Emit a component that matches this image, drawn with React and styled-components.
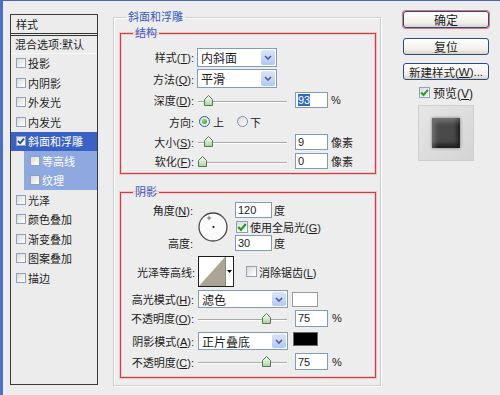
import React from 'react';
import styled, { createGlobalStyle } from 'styled-components';

const Global = createGlobalStyle`
  html, body { margin: 0; padding: 0; background: #ededed; }
  body { font-family: "Liberation Sans", "Noto Sans CJK SC", sans-serif; font-size: 11px; color: #1c1c1c; }
  * { box-sizing: border-box; }
`;

const Window = styled.div`
  width: 500px;
  height: 395px;
  overflow: hidden;
  background: #ededed;
  border-left: 3px solid #4a70c8;
  border-top: 1px solid #4b68a8;
  display: flex;
  align-items: flex-start;
  padding: 9px 0 0 7px;
`;

/* ---------- left style list ---------- */
const StylePanel = styled.div`
  width: 88px;
  height: 371px;
  margin-top: 4px;
  flex: none;
  border: 1px solid #3a3a3a;
  background: #ececec;
  display: flex;
  flex-direction: column;
`;

const PanelHeader = styled.div`
  height: 21px;
  flex: none;
  padding-left: 5px;
  display: flex;
  align-items: center;
  border-bottom: 3px double #333;
`;

const BlendRow = styled.div`
  height: 17.5px;
  flex: none;
  padding-left: 4px;
  display: flex;
  align-items: center;
  white-space: nowrap;
  border-bottom: 1px solid #f8f8f8;
`;

const LayerRow = styled.div`
  height: 19.5px;
  flex: none;
  display: flex;
  align-items: center;
  gap: 2px;
  margin-left: ${(p) => (p.$sub ? 13 : 0)}px;
  padding-left: ${(p) => (p.$sub ? 6 : 5)}px;
  background: ${(p) => (p.$selected ? '#3a62c6' : p.$sub ? '#8ea8e0' : 'transparent')};
  color: ${(p) => (p.$selected || p.$sub ? '#fff' : '#1c1c1c')};
  white-space: nowrap;
`;

const Box = styled.span`
  width: ${(p) => p.$size}px;
  height: ${(p) => p.$size}px;
  flex: none;
  margin-left: ${(p) => p.$ml || 0}px;
  border: 1px solid #8ea2bf;
  background: linear-gradient(135deg, #dedbd2, #ffffff);
  display: inline-flex;
  align-items: center;
  justify-content: center;
`;

const CheckBox = ({ checked, size = 10, ml, color = '#21a121' }) => (
  <Box $size={size} $ml={ml}>
    {checked && (
      <svg width={size - 2} height={size - 2} viewBox="0 0 8 8">
        <path d="M1 4 L3.2 6.2 L7 1.6" stroke={color} strokeWidth="1.8" fill="none" />
      </svg>
    )}
  </Box>
);

/* ---------- main groups ---------- */
const OuterGroup = styled.fieldset`
  margin: 0 0 0 15px;
  width: 268px;
  height: 376px;
  min-width: 0;
  flex: none;
  padding: 0 4px 0 6px;
  border: 1px solid #cdcdcd;
  box-shadow: 1px 1px 0 #fff, inset 1px 1px 0 #fff;
  display: flex;
  flex-direction: column;
`;

const Legend = styled.legend`
  margin-left: ${(p) => (p.$ml != null ? p.$ml : 12)}px;
  padding: 0 2px;
  font-size: 11px;
  line-height: 14px;
  color: #3658c0;
`;

const Section = styled.fieldset`
  margin: ${(p) => p.$mt}px 0 0 0;
  padding: ${(p) => p.$pt}px 0 0 0;
  height: ${(p) => p.$h}px;
  min-width: 0;
  flex: none;
  border: 1px solid #d43c44;
  box-shadow: 0 0 0 1px rgba(232, 150, 150, 0.45), inset 0 0 0 1px rgba(232, 150, 150, 0.35);
  display: flex;
  flex-direction: column;
`;

const Row = styled.div`
  display: flex;
  align-items: center;
  flex: none;
  height: ${(p) => p.$h}px;
  margin-top: ${(p) => p.$mt || 0}px;
`;

const Label = styled.span`
  width: 76px;
  flex: none;
  text-align: right;
  padding-right: ${(p) => (p.$pr != null ? p.$pr : 3)}px;
  font-size: 11px;
  white-space: nowrap;
  grid-column: 1;
  grid-row: ${(p) => p.$row || 'auto'};
  justify-self: stretch;
`;

const Select = styled.div`
  width: ${(p) => p.$w}px;
  height: ${(p) => p.$h}px;
  margin-left: ${(p) => p.$ml || 0}px;
  flex: none;
  border: 1px solid #7f9db9;
  background: #fff;
  display: flex;
  align-items: center;
  padding-left: 3px;
  font-size: 12px;
`;

const SelectText = styled.span`
  flex: 1;
  white-space: nowrap;
`;

const SelectArrow = styled.span`
  width: 14px;
  align-self: stretch;
  margin: 1px;
  border-radius: 2px;
  background: linear-gradient(#dbe5fb, #b3c7f3);
  display: flex;
  align-items: center;
  justify-content: center;
`;

const Dropdown = ({ text, w, h = 19, ml }) => (
  <Select $w={w} $h={h} $ml={ml}>
    <SelectText>{text}</SelectText>
    <SelectArrow>
      <svg width="8" height="5" viewBox="0 0 8 5">
        <path d="M1 1 L4 4 L7 1" stroke="#4d6185" strokeWidth="1.6" fill="none" />
      </svg>
    </SelectArrow>
  </Select>
);

const NumBox = styled.div`
  width: ${(p) => p.$w || 33}px;
  height: ${(p) => p.$h || 16}px;
  margin-left: ${(p) => p.$ml || 0}px;
  flex: none;
  border: 1px solid #7f9db9;
  background: #fff;
  font-size: 11px;
  padding-left: 2px;
  display: flex;
  align-items: center;
`;

const Highlight = styled.span`
  background: #316ac5;
  color: #fff;
`;

const Unit = styled.span`
  margin-left: ${(p) => (p.$ml != null ? p.$ml : 3)}px;
  font-size: 11px;
  white-space: nowrap;
`;

const Track = styled.div`
  position: relative;
  width: ${(p) => p.$w || 89}px;
  height: 11px;
  margin-left: ${(p) => p.$ml || 0}px;
  flex: none;
  &::before {
    content: '';
    position: absolute;
    left: 0;
    right: 0;
    top: 6px;
    height: 1px;
    background: #a9a9a9;
    box-shadow: 0 1px 0 #fff;
  }
`;

const ThumbSvg = styled.svg`
  position: absolute;
  top: 0;
`;

const Slider = ({ pos, w = 89, ml = 1 }) => (
  <Track $w={w} $ml={ml}>
    <ThumbSvg width="9" height="11" viewBox="0 0 9 11" style={{ left: `${pos * (w - 9)}px` }}>
      <defs>
        <linearGradient id="tg" x1="0" y1="0" x2="0" y2="1">
          <stop offset="0" stopColor="#ffffff" />
          <stop offset="1" stopColor="#a3d896" />
        </linearGradient>
      </defs>
      <path d="M0.5 4.5 L4.5 0.5 L8.5 4.5 L8.5 10.5 L0.5 10.5 Z" fill="url(#tg)" stroke="#5a735a" strokeWidth="1" />
    </ThumbSvg>
  </Track>
);

const RadioCircle = styled.span`
  width: 11px;
  height: 11px;
  flex: none;
  margin-left: ${(p) => p.$ml || 0}px;
  border-radius: 50%;
  border: 1px solid ${(p) => (p.$on ? '#2a5a96' : '#6d8fb8')};
  background: linear-gradient(135deg, #dcdad2, #ffffff);
  display: inline-flex;
  align-items: center;
  justify-content: center;
`;

const RadioDot = styled.span`
  width: 5px;
  height: 5px;
  border-radius: 50%;
  background: radial-gradient(circle at 35% 35%, #7fe07f, #1f9a1f);
`;

const Text = styled.span`
  margin-left: ${(p) => p.$ml || 0}px;
  font-size: ${(p) => p.$fs || 11}px;
  white-space: nowrap;
`;

/* ---------- angle block ---------- */
const AngleGrid = styled.div`
  display: grid;
  grid-template-columns: 76px 38px auto;
  grid-template-rows: 16px 17px 16px;
  align-items: center;
  justify-items: start;
  flex: none;
`;

const Dial = styled.svg`
  grid-column: 2;
  grid-row: 1 / span 3;
  margin-left: 1px;
`;

const Cell = styled.div`
  grid-column: 3;
  grid-row: ${(p) => p.$row};
  display: flex;
  align-items: center;
`;

/* ---------- contour thumb ---------- */
const ContourBox = styled.div`
  width: 36px;
  height: 31px;
  margin-left: 1px;
  flex: none;
  border: 1px solid #1e1e1e;
  background: #fff;
  display: flex;
`;

const ContourArrow = styled.span`
  width: 8px;
  border-left: 1px solid #8a8a8a;
  display: flex;
  align-items: center;
  justify-content: center;
`;

const Swatch = styled.span`
  width: ${(p) => p.$w}px;
  height: ${(p) => p.$h}px;
  margin-left: ${(p) => p.$ml}px;
  flex: none;
  background: ${(p) => p.$color};
  border: 1px solid ${(p) => p.$border};
  align-self: ${(p) => p.$align || 'center'};
`;

/* ---------- right column ---------- */
const Side = styled.div`
  margin-left: 22px;
  width: 86px;
  flex: none;
  padding-top: 1px;
  display: flex;
  flex-direction: column;
  align-items: center;
`;

const DialogButton = styled.div`
  width: 86px;
  height: 17px;
  flex: none;
  margin-top: ${(p) => p.$mt || 0}px;
  border: 1px solid #2b4d7e;
  border-radius: 3px;
  background: linear-gradient(#ffffff, #f1f0ec 70%, #d9d4ca);
  font-size: ${(p) => p.$fs || 12}px;
  display: flex;
  align-items: center;
  justify-content: center;
  white-space: nowrap;
  box-shadow: ${(p) => (p.$default ? '0 0 0 1px #e3707e' : 'none')};
`;

const PreviewRow = styled.div`
  margin-top: 6px;
  height: 12px;
  display: flex;
  align-items: center;
`;

const PreviewBox = styled.div`
  margin-top: 7px;
  width: 56px;
  height: 56px;
  border: 1px solid #cfcfcf;
  background: linear-gradient(135deg, #e6e6e6, #d4d4d4);
  display: flex;
  align-items: center;
  justify-content: center;
`;

const PreviewTile = styled.div`
  width: 28px;
  height: 30px;
  background: #4a4a4a;
  filter: blur(0.4px);
  box-shadow: inset 3px 4px 4px rgba(255, 255, 255, 0.22), inset -3px -4px 4px rgba(0, 0, 0, 0.6), 0 0 3px rgba(0, 0, 0, 0.45);
`;

const layers = [
  { name: '投影' },
  { name: '内阴影' },
  { name: '外发光' },
  { name: '内发光' },
  { name: '斜面和浮雕', selected: true, checked: true },
  { name: '等高线', sub: true },
  { name: '纹理', sub: true },
  { name: '光泽' },
  { name: '颜色叠加' },
  { name: '渐变叠加' },
  { name: '图案叠加' },
  { name: '描边' },
];

export default function App() {
  return (
    <>
      <Global />
      <Window>
        <StylePanel>
          <PanelHeader>样式</PanelHeader>
          <BlendRow>混合选项:默认</BlendRow>
          {layers.map((l) => (
            <LayerRow key={l.name} $selected={l.selected} $sub={l.sub}>
              <CheckBox checked={l.checked} size={10} color="#1d4f9c" />
              <span>{l.name}</span>
            </LayerRow>
          ))}
        </StylePanel>

        <OuterGroup>
          <Legend $ml={6}>斜面和浮雕</Legend>

          <Section $mt={2} $pt={6.5} $h={148}>
            <Legend>结构</Legend>
            <Row $h={21}>
              <Label>样式(<u>T</u>):</Label>
              <Dropdown text="内斜面" w={80} />
            </Row>
            <Row $h={22}>
              <Label>方法(<u>Q</u>):</Label>
              <Dropdown text="平滑" w={80} />
            </Row>
            <Row $h={21.5}>
              <Label>深度(<u>D</u>):</Label>
              <Slider pos={0.08} />
              <NumBox $ml={8}><Highlight>93</Highlight></NumBox>
              <Unit>%</Unit>
            </Row>
            <Row $h={21}>
              <Label>方向:</Label>
              <RadioCircle $on $ml={2}><RadioDot /></RadioCircle>
              <Text $ml={3}>上</Text>
              <RadioCircle $ml={13} />
              <Text $ml={2}>下</Text>
            </Row>
            <Row $h={19.5}>
              <Label>大小(<u>S</u>):</Label>
              <Slider pos={0.08} />
              <NumBox $ml={8}>9</NumBox>
              <Unit>像素</Unit>
            </Row>
            <Row $h={19}>
              <Label>软化(<u>F</u>):</Label>
              <Slider pos={0} />
              <NumBox $ml={8}>0</NumBox>
              <Unit>像素</Unit>
            </Row>
          </Section>

          <Section $mt={11} $pt={3} $h={193}>
            <Legend>阴影</Legend>
            <AngleGrid>
              <Label $row={1} $pr={4}>角度(<u>N</u>):</Label>
              <Dial width="30" height="30" viewBox="0 0 30 30">
                <circle cx="15" cy="15" r="14" fill="#fbfbfb" stroke="#4a4a4a" strokeWidth="1.3" />
                <path d="M11 3.8 V8.2 M8.8 6 H13.2" stroke="#555" strokeWidth="0.8" />
                <circle cx="15.5" cy="15" r="1.1" fill="#111" />
              </Dial>
              <Cell $row={1}>
                <NumBox $w={37} $h={16}>120</NumBox>
                <Unit $ml={2}>度</Unit>
              </Cell>
              <Cell $row={2}>
                <CheckBox checked size={12} ml={1} />
                <Text $ml={2}>使用全局光(<u>G</u>)</Text>
              </Cell>
              <Label $row={3} $pr={4}>高度:</Label>
              <Cell $row={3}>
                <NumBox $w={37} $h={16}>30</NumBox>
                <Unit $ml={2}>度</Unit>
              </Cell>
            </AngleGrid>

            <Row $h={31} $mt={5}>
              <Label $pr={2}>光泽等高线:</Label>
              <ContourBox>
                <svg width="26" height="29" viewBox="0 0 26 29">
                  <polygon points="0,29 26,0 26,29" fill="#aca595" />
                </svg>
                <ContourArrow>
                  <svg width="5" height="3" viewBox="0 0 5 3">
                    <polygon points="0,0 5,0 2.5,3" fill="#000" />
                  </svg>
                </ContourArrow>
              </ContourBox>
              <CheckBox size={11} ml={12} />
              <Text $ml={2}>消除锯齿(<u>L</u>)</Text>
            </Row>

            <Row $h={18} $mt={3}>
              <Label>高光模式(<u>H</u>):</Label>
              <Dropdown text="滤色" w={90} h={18} ml={1} />
              <Swatch $w={26} $h={15} $ml={4} $color="#ffffff" $border="#9a9a9a" />
            </Row>
            <Row $h={18} $mt={1}>
              <Label>不透明度(<u>O</u>):</Label>
              <Slider pos={0.806} />
              <NumBox $ml={8} $h={17}>75</NumBox>
              <Unit $ml={4}>%</Unit>
            </Row>
            <Row $h={18} $mt={5}>
              <Label>阴影模式(<u>A</u>):</Label>
              <Dropdown text="正片叠底" w={90} h={18} ml={1} />
              <Swatch $w={25} $h={14} $ml={5} $color="#000000" $border="#6a6a6a" $align="flex-start" />
            </Row>
            <Row $h={17} $mt={3}>
              <Label>不透明度(<u>C</u>):</Label>
              <Slider pos={0.806} />
              <NumBox $ml={8} $h={17}>75</NumBox>
              <Unit $ml={4}>%</Unit>
            </Row>
          </Section>
        </OuterGroup>

        <Side>
          <DialogButton $default>确定</DialogButton>
          <DialogButton $mt={10}>复位</DialogButton>
          <DialogButton $mt={8} $fs={11.5}>新建样式(<u>W</u>)...</DialogButton>
          <PreviewRow>
            <CheckBox checked size={11} />
            <Text $ml={3} $fs={12}>预览(<u>V</u>)</Text>
          </PreviewRow>
          <PreviewBox>
            <PreviewTile />
          </PreviewBox>
        </Side>
      </Window>
    </>
  );
}
